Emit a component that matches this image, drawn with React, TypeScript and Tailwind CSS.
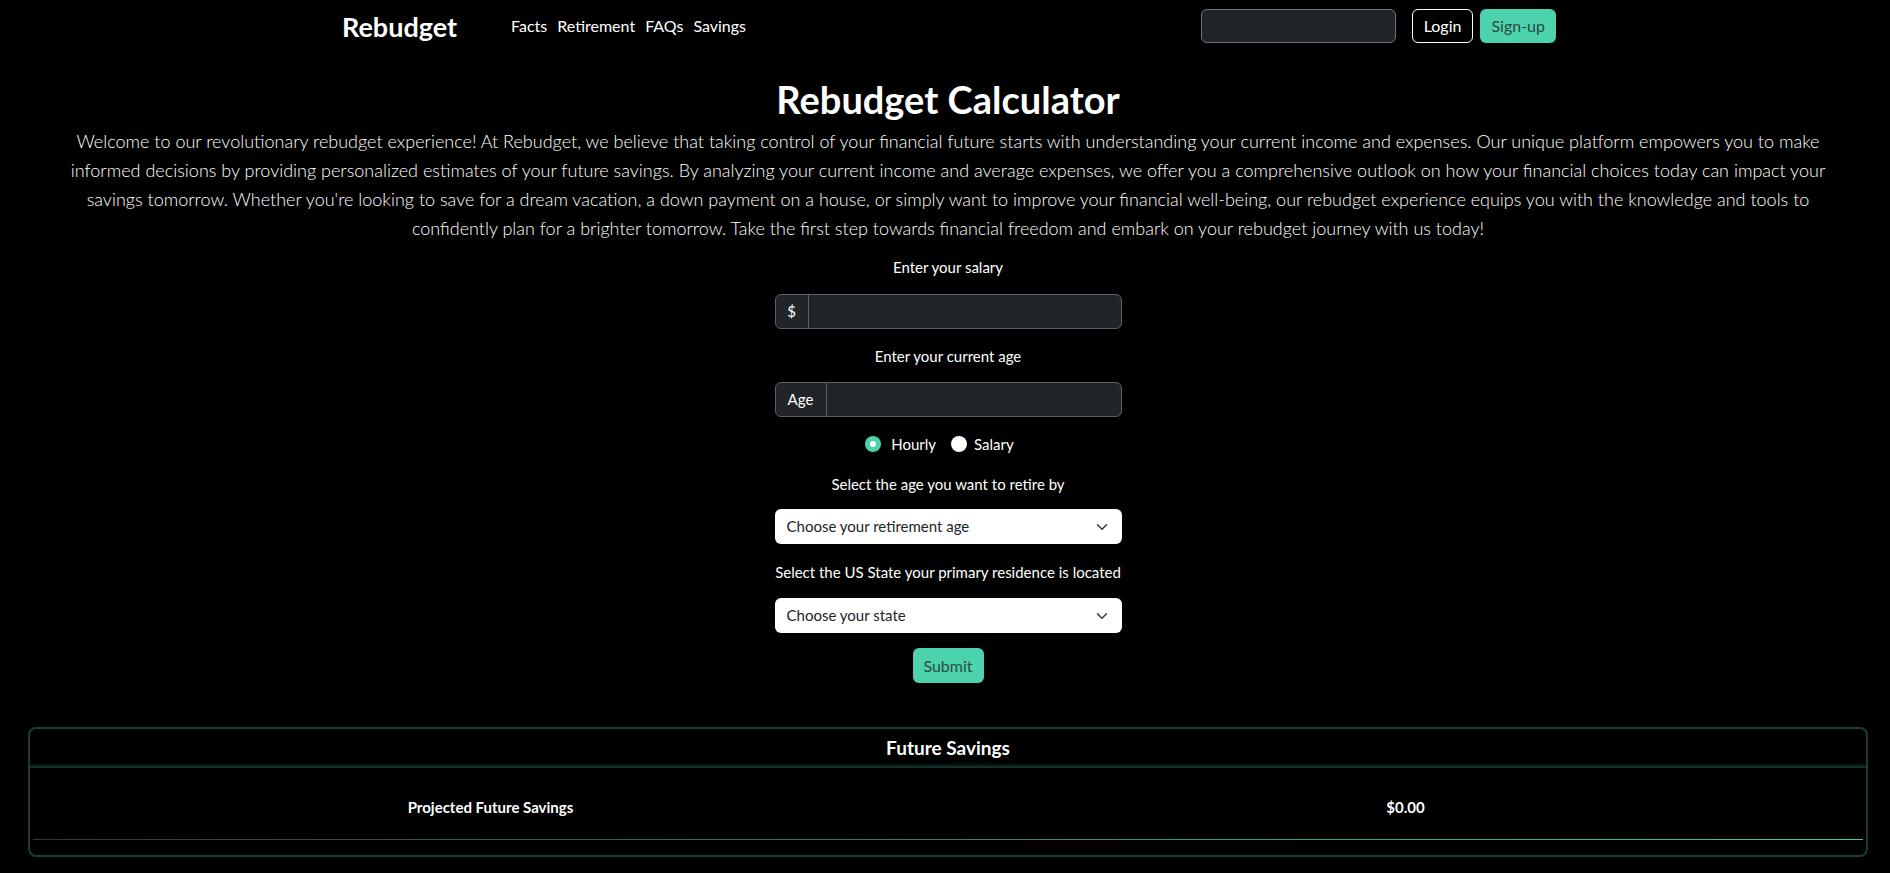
import { useState } from "react";

function Chevron() {
  return (
    <svg viewBox="0 0 16 16" className="w-4 h-3" fill="none">
      <path d="m2 5 6 6 6-6" stroke="#343a40" strokeWidth="2" strokeLinecap="round" strokeLinejoin="round" />
    </svg>
  );
}

function Navbar() {
  return (
    <nav className="flex items-center h-[52px] pl-[336px] pr-[334px]">
      <a className="text-[27px] font-bold leading-none">Rebudget</a>
      <ul className="flex ml-[49px] text-[16px]">
        <li className="px-[5px]">Facts</li>
        <li className="px-[5px]">Retirement</li>
        <li className="px-[5px]">FAQs</li>
        <li className="px-[5px]">Savings</li>
      </ul>

      <div className="ml-auto flex items-center">
        <input className="w-[195px] h-[34px] rounded-[6px] bg-[#212529] border border-[#6c757d] outline-none px-3" />
        <button className="ml-[16px] h-[34px] px-[11px] rounded-[6px] border border-white text-[16px]">Login</button>
        <button className="ml-[7px] h-[34px] px-[11px] rounded-[6px] bg-[#4cd3ae] text-[#2d4a43] text-[16px]">Sign-up</button>
      </div>
    </nav>
  );
}

function CalcForm() {
  const [payType, setPayType] = useState("hourly");

  return (
    <div className="flex flex-col items-center text-[15px]">
      <label className="mt-[13px] leading-[22px]">Enter your salary</label>
      <div className="mt-[16px] flex w-[347px] h-[35px] rounded-[6px] border border-[#5c6166] bg-[#212529] overflow-hidden">
        <span className="w-[33px] flex items-center justify-center border-r border-[#5c6166]">$</span>
        <input className="flex-1 bg-transparent outline-none px-3" />
      </div>

      <label className="mt-[16px] leading-[22px]">Enter your current age</label>
      <div className="mt-[15px] flex w-[347px] h-[35px] rounded-[6px] border border-[#5c6166] bg-[#212529] overflow-hidden">
        <span className="w-[51px] flex items-center justify-center border-r border-[#5c6166]">Age</span>
        <input className="flex-1 bg-transparent outline-none px-3" />
      </div>

      {/* hourly / salary */}
      <div className="mt-[16px] h-[22px] flex items-center pr-[17px]">
        <button onClick={() => setPayType("hourly")} className="flex items-center">
          <span className={payType === "hourly" ? "w-4 h-4 rounded-full bg-[#4cd3ae] flex items-center justify-center" : "w-4 h-4 rounded-full bg-white"}>
            {payType === "hourly" && <span className="w-[6px] h-[6px] rounded-full bg-white" />}
          </span>
          <span className="ml-[10px]">Hourly</span>
        </button>
        <button onClick={() => setPayType("salary")} className="flex items-center ml-[15px]">
          <span className={payType === "salary" ? "w-4 h-4 rounded-full bg-[#4cd3ae] flex items-center justify-center" : "w-4 h-4 rounded-full bg-white"}>
            {payType === "salary" && <span className="w-[6px] h-[6px] rounded-full bg-white" />}
          </span>
          <span className="ml-[7px]">Salary</span>
        </button>
      </div>

      <label className="mt-[18px] leading-[22px]">Select the age you want to retire by</label>
      <div className="mt-[14px] w-[347px] h-[35px] rounded-[6px] bg-white text-[#212529] flex items-center justify-between pl-[12px] pr-[12px]">
        <span>Choose your retirement age</span>
        <Chevron />
      </div>

      <label className="mt-[17px] leading-[22px]">Select the US State your primary residence is located</label>
      <div className="mt-[15px] w-[347px] h-[35px] rounded-[6px] bg-white text-[#212529] flex items-center justify-between pl-[12px] pr-[12px]">
        <span>Choose your state</span>
        <Chevron />
      </div>

      <button className="mt-[15px] w-[71px] h-[35px] rounded-[6px] bg-[#4cd3ae] text-[#2d4a43] text-[16px]">Submit</button>
    </div>
  );
}

function SavingsCard() {
  return (
    <div className="mt-[44px] mx-[22px] border-2 border-[#1c3d33] rounded-[8px] overflow-hidden">
      <div className="h-[32px] flex items-center justify-center text-[19px] font-bold pt-[6px]">Future Savings</div>
      <div className="h-[7px] bg-gradient-to-b from-black to-[#1d3b32]" />

      <div className="px-[3px] pt-[8px] pb-[15px]">
        <div className="h-[63px] grid grid-cols-2 items-center text-center text-[15px] font-bold">
          <span>Projected Future Savings</span>
          <span>$0.00</span>
        </div>
        <div className="h-px bg-gradient-to-r from-[#1a4235] to-[#42cc9f]" />
      </div>
    </div>
  );
}

export default function App() {
  return (
    <div className="min-h-screen bg-black text-white font-['Lato',sans-serif] pl-[6px]">
      <Navbar />

      <h1 className="mt-[23px] text-center text-[38px] font-bold leading-[48px]">Rebudget Calculator</h1>
      <p className="mt-[4px] text-center text-[18px] font-light leading-[29px] whitespace-nowrap">
        Welcome to our revolutionary rebudget experience! At Rebudget, we believe that taking control of your financial future starts with understanding your current income and expenses. Our unique platform empowers you to make
        <br />
        informed decisions by providing personalized estimates of your future savings. By analyzing your current income and average expenses, we offer you a comprehensive outlook on how your financial choices today can impact your
        <br />
        savings tomorrow. Whether you're looking to save for a dream vacation, a down payment on a house, or simply want to improve your financial well-being, our rebudget experience equips you with the knowledge and tools to
        <br />
        confidently plan for a brighter tomorrow. Take the first step towards financial freedom and embark on your rebudget journey with us today!
      </p>

      <CalcForm />
      <SavingsCard />
    </div>
  );
}
